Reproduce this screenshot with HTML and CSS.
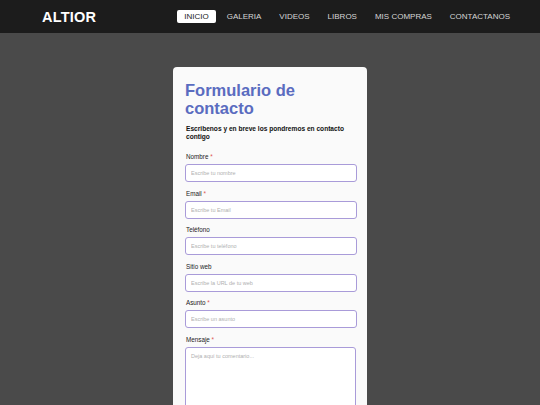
FILE: index.html
```html
<!DOCTYPE html>
<html lang="es">
<head>
<meta charset="utf-8">
<title>Altior</title>
<link rel="stylesheet" href="styles.css">
</head>
<body>
<header class="topbar">
  <div class="logo">ALTIOR</div>
  <nav class="nav">
    <a class="nav-item active" href="#">INICIO</a>
    <a class="nav-item" href="#">GALERIA</a>
    <a class="nav-item" href="#">VIDEOS</a>
    <a class="nav-item" href="#">LIBROS</a>
    <a class="nav-item" href="#">MIS COMPRAS</a>
    <a class="nav-item" href="#">CONTACTANOS</a>
  </nav>
</header>
<main class="main">
  <form class="card">
    <h1 class="title">Formulario de contacto</h1>
    <p class="subtitle">Escribenos y en breve los pondremos en contacto contigo</p>
    <div class="field">
      <label class="label">Nombre <span class="req">*</span></label>
      <input class="input" type="text" placeholder="Escribe tu nombre">
    </div>
    <div class="field">
      <label class="label">Email <span class="req">*</span></label>
      <input class="input" type="text" placeholder="Escribe tu Email">
    </div>
    <div class="field">
      <label class="label">Teléfono</label>
      <input class="input" type="text" placeholder="Escribe tu teléfono">
    </div>
    <div class="field">
      <label class="label">Sitio web</label>
      <input class="input" type="text" placeholder="Escribe la URL de tu web">
    </div>
    <div class="field">
      <label class="label">Asunto <span class="req">*</span></label>
      <input class="input" type="text" placeholder="Escribe un asunto">
    </div>
    <div class="field">
      <label class="label">Mensaje <span class="req">*</span></label>
      <textarea class="input textarea" placeholder="Deja aquí tu comentario..."></textarea>
    </div>
  </form>
</main>
</body>
</html>
```
FILE: styles.css
```css
* { box-sizing: border-box; }
html, body {
  margin: 0;
  padding: 0;
  background: #4a4a4a;
  font-family: "Liberation Sans", Arial, sans-serif;
  overflow: hidden;
  height: 405px;
}
.topbar {
  height: 33px;
  background: #1c1c1c;
  display: flex;
  align-items: center;
  justify-content: space-between;
  padding: 0 23px 0 42px;
}
.logo {
  color: #ffffff;
  font-weight: bold;
  font-size: 14.5px;
  letter-spacing: 0.2px;
}
.nav {
  display: flex;
  gap: 4px;
  align-items: center;
}
.nav-item {
  color: #d6d6d6;
  text-decoration: none;
  font-size: 8px;
  letter-spacing: 0;
  padding: 0 7px;
  height: 13px;
  line-height: 13px;
  border-radius: 2px;
}
.nav-item.active {
  background: #ffffff;
  color: #1c1c1c;
}
.main {
  display: flex;
  justify-content: center;
  padding-top: 34px;
}
.card {
  width: 194px;
  background: #fafafa;
  border-radius: 4px;
  padding: 14px 10px 0 12px;
  height: 360px;
}
.title {
  margin: 0;
  color: #5a6cc0;
  font-size: 16.5px;
  line-height: 18px;
  font-weight: bold;
}
.subtitle {
  margin: 8px 0 0 1px;
  font-size: 6.6px;
  line-height: 7.5px;
  font-weight: bold;
  color: #111;
}
.field {
  display: flex;
  flex-direction: column;
  margin-top: 13px;
}
.field + .field { margin-top: 7.5px; }
.label {
  font-size: 6.3px;
  line-height: 7px;
  color: #222;
  margin-bottom: 4px;
  margin-left: 1px;
}
.req { color: #d55; }
.input {
  width: 172px;
  height: 18px;
  border: 1px solid #a99bd9;
  border-radius: 3px;
  background: #ffffff;
  font-family: "Liberation Sans", Arial, sans-serif;
  font-size: 5.5px;
  padding: 0 5px;
  outline: none;
}
.input::placeholder { color: #b0b0b0; }
.textarea {
  width: 171px;
  height: 80px;
  resize: none;
  padding: 5px 5px;
}
```
